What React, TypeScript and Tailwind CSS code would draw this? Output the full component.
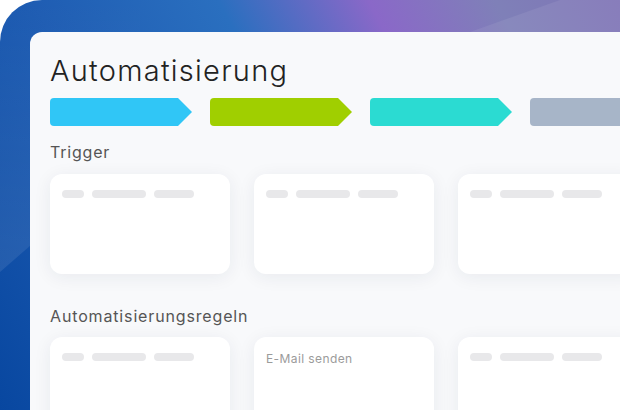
import React from "react";

const steps = [
  "bg-[#30c6f6]",
  "bg-[#a0cf00]",
  "bg-[#2bdbd2]",
  "bg-[#a7b5c8]",
];

function Skeleton() {
  return (
    <div className="flex gap-2">
      <span className="h-2 w-[22px] rounded-full bg-[#e8e8ea]" />
      <span className="h-2 w-[54px] rounded-full bg-[#e8e8ea]" />
      <span className="h-2 w-[40px] rounded-full bg-[#e8e8ea]" />
    </div>
  );
}

function Card({ label }: { label?: string }) {
  return (
    <div className="w-[180px] h-[100px] shrink-0 rounded-xl bg-white px-3 pt-4 shadow-[0_3px_18px_rgba(30,40,70,0.07)]">
      {label ? (
        <p className="text-[12px] leading-[12px] tracking-[0.4px] text-[#9b9b9b]">{label}</p>
      ) : (
        <Skeleton />
      )}
    </div>
  );
}

export default function App() {
  return (
    <div className="w-[620px] h-[410px] overflow-hidden bg-white font-['Inter',sans-serif]">
      <div className="relative h-full rounded-tl-[42px] overflow-hidden pl-[30px] pt-[32px] bg-[linear-gradient(62deg,#0847a0_0%,#1f5db3_30%,#2a6fbf_52%,#8a68c8_70%,#7f80b8_85%,#7f74b6_100%)]">
        <svg className="absolute inset-0" width="620" height="410" viewBox="0 0 620 410">
          <defs>
            <linearGradient id="glow" x1="0" y1="0" x2="0" y2="1">
              <stop offset="0" stopColor="#fff" stopOpacity="0" />
              <stop offset="1" stopColor="#fff" stopOpacity="0.09" />
            </linearGradient>
          </defs>
          <polygon points="0,272 140,150 140,0 0,0" fill="url(#glow)" />
          <polygon points="470,32 560,0 620,0 620,32" fill="rgba(255,255,255,0.07)" />
        </svg>
        <div className="relative h-full rounded-tl-xl bg-[#f8f9fb] pl-5 pt-[21px] overflow-hidden">
          <h1 className="text-[29px] leading-[36px] font-light tracking-[1.25px] text-[#222]">
            Automatisierung
          </h1>
          <div className="mt-[9px] flex gap-[18px]">
            {steps.map((c) => (
              <div
                key={c}
                className={`h-7 w-[142px] shrink-0 rounded-l-[4px] ${c} [clip-path:polygon(0_0,calc(100%-14px)_0,100%_50%,calc(100%-14px)_100%,0_100%)]`}
              />
            ))}
          </div>
          <h2 className="mt-[16px] text-[16px] leading-[20px] tracking-[0.8px] text-[#555]">Trigger</h2>
          <div className="mt-[12px] flex gap-6">
            <Card />
            <Card />
            <Card />
          </div>
          <h2 className="mt-[32px] text-[16px] leading-[20px] tracking-[0.85px] text-[#555]">
            Automatisierungsregeln
          </h2>
          <div className="mt-[11px] flex gap-6">
            <Card />
            <Card label="E-Mail senden" />
            <Card />
          </div>
        </div>
      </div>
    </div>
  );
}
